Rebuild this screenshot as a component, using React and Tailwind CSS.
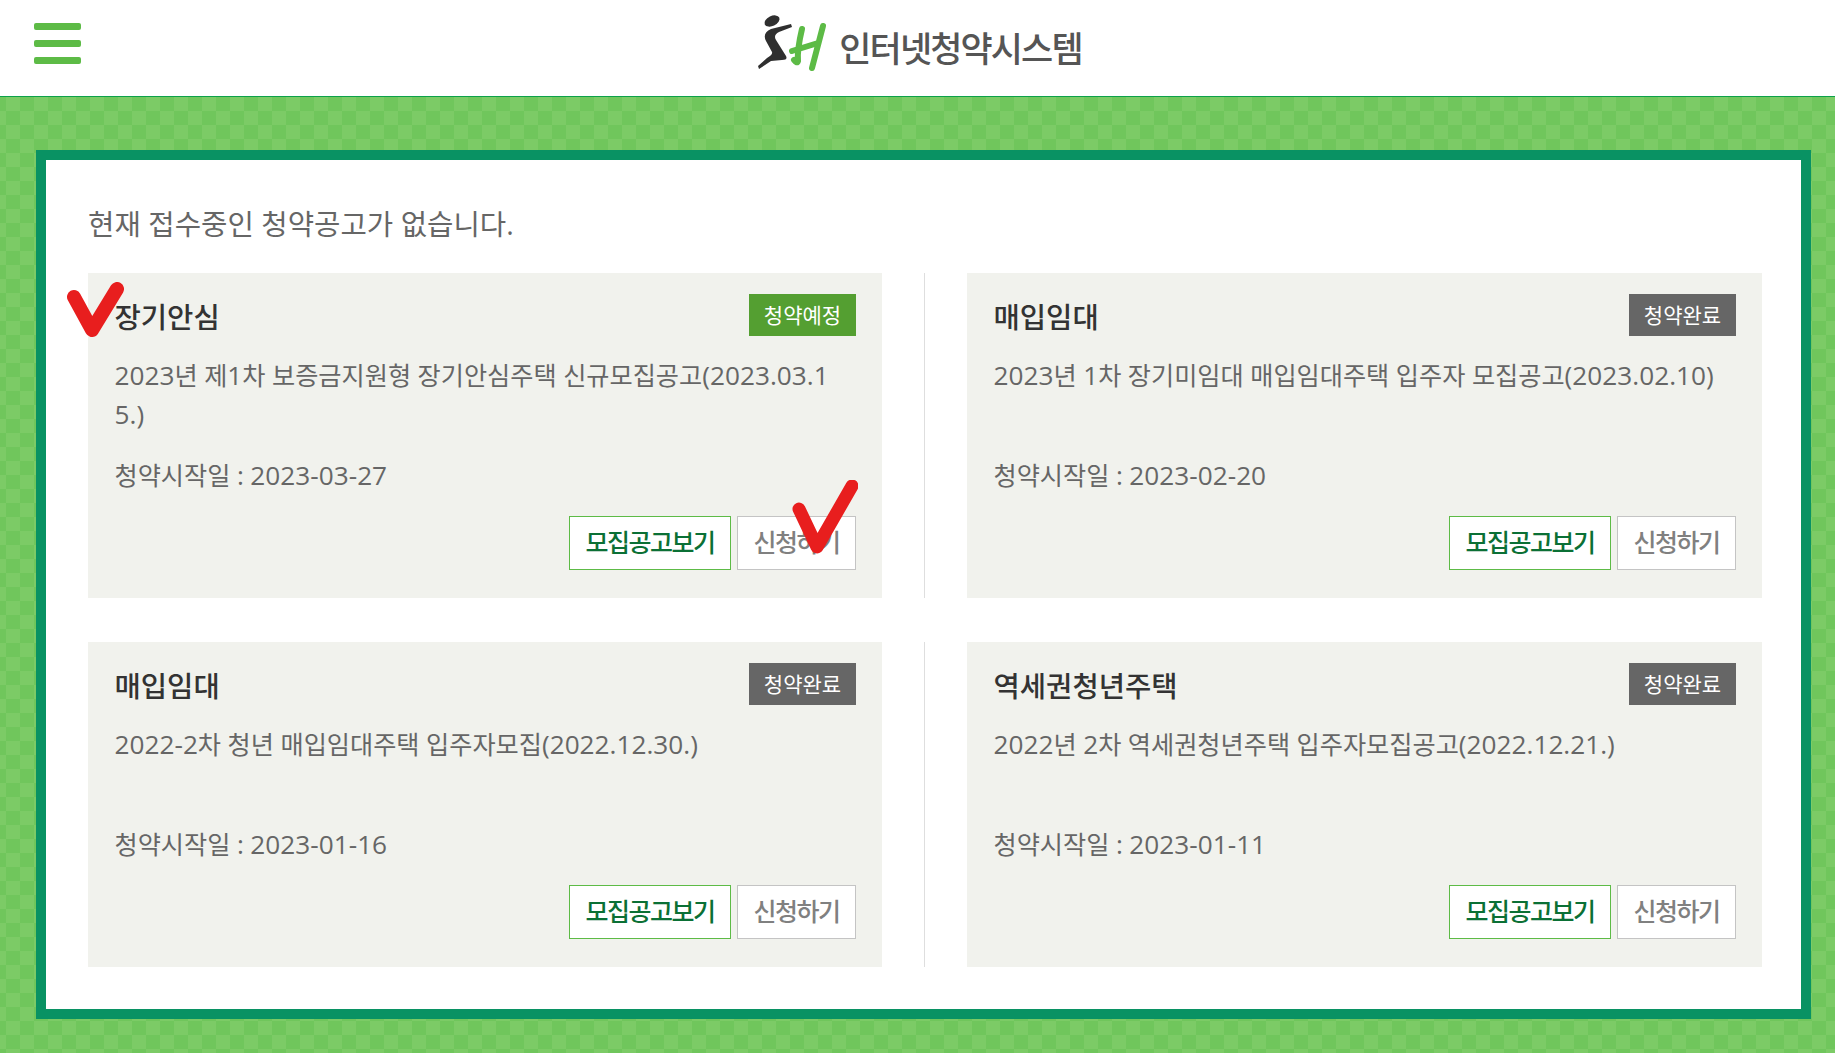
const notices = [
  {
    category: "장기안심",
    status: "청약예정",
    title: "2023년 제1차 보증금지원형 장기안심주택 신규모집공고(2023.03.15.)",
    date: "청약시작일 : 2023-03-27",
  },
  {
    category: "매입임대",
    status: "청약완료",
    title: "2023년 1차 장기미임대 매입임대주택 입주자 모집공고(2023.02.10)",
    date: "청약시작일 : 2023-02-20",
  },
  {
    category: "매입임대",
    status: "청약완료",
    title: "2022-2차 청년 매입임대주택 입주자모집(2022.12.30.)",
    date: "청약시작일 : 2023-01-16",
  },
  {
    category: "역세권청년주택",
    status: "청약완료",
    title: "2022년 2차 역세권청년주택 입주자모집공고(2022.12.21.)",
    date: "청약시작일 : 2023-01-11",
  },
];

// 숫자/기호는 한글보다 살짝 크게 보여서 글자별로 따로 감싼다
const MixedText = ({ text }) =>
  text.split(/([0-9.\-():])/).map((part, i) =>
    /^[0-9.\-():]$/.test(part) ? (
      <span key={i} className="text-[26.2px]">
        {part}
      </span>
    ) : (
      part
    )
  );

const Logo = () => (
  <svg width="90" height="70" viewBox="0 0 90 70" className="mb-[6px] shrink-0">
    <ellipse cx="23" cy="11" rx="8" ry="5" fill="#2f2f2f" transform="rotate(-25 23 11)" />
    <path
      d="M42 14 L43 17 L30 22 Q24 25 27 30 L37 46 Q39 50 33 50 L22 51 L10 59 L9 56 L18 48 Q24 45 23 42 L17 31 Q13 23 22 19 Z"
      fill="#2f2f2f"
    />
    <path
      d="M53 19 Q48 40 49 51 Q48 54 45 50 M74 16 L63 58 M43 41 L69 33"
      stroke="#5dbb46"
      strokeWidth="6"
      fill="none"
      strokeLinecap="round"
    />
  </svg>
);

const Check = ({ className, d, viewBox, width }) => (
  <svg className={className} viewBox={viewBox}>
    <path d={d} stroke="#e81e1e" strokeWidth={width} strokeLinecap="round" strokeLinejoin="round" fill="none" />
  </svg>
);

const NoticeCard = ({ notice, check }) => (
  <div className="relative h-[325px] bg-[#f1f2ed] pl-[26.5px] pr-[26px] pt-[21px]">
    <div className="flex items-start justify-between">
      <h3 className="mt-[2px] text-[28.6px] leading-[42px] font-medium text-[#333]">{notice.category}</h3>
      <span
        className={`flex h-[42px] w-[107px] items-center justify-center pt-[1px] text-[21px] text-white ${
          notice.status === "청약예정" ? "bg-[#549f31]" : "bg-[#666666]"
        }`}
      >
        {notice.status}
      </span>
    </div>
    <p className="mt-[18px] h-[78px] w-[724px] text-[25.2px] leading-[39px] text-[#666] break-all">
      <MixedText text={notice.title} />
    </p>
    <p className="mt-[22px] h-[39px] text-[25.2px] leading-[39px] text-[#666]">
      <MixedText text={notice.date} />
    </p>
    <div className="mt-[21px] flex justify-end gap-[6px]">
      <button className="h-[54px] w-[162px] border border-[#5dbb46] bg-white text-[25px] font-medium text-[#0b7035] tracking-[-1.5px]">
        모집공고보기
      </button>
      <button className="h-[54px] w-[119px] border border-[#c4c4c4] bg-white text-[25px] font-medium text-[#808080] tracking-[-1.5px]">
        신청하기
      </button>
    </div>
    {check}
  </div>
);

export default function App() {
  return (
    <div className="min-h-[1053px] font-['Open_Sans','Noto_Sans_CJK_KR',sans-serif] bg-white">
      {/* 상단 헤더 */}
      <header className="relative flex h-[97px] items-center justify-center border-b border-[#0ca14a] bg-white">
        <button className="absolute left-[34px] top-[23px] flex w-[47px] flex-col gap-[10px]">
          <span className="h-[7px] rounded-[2px] bg-[#5dbb46]" />
          <span className="h-[7px] rounded-[2px] bg-[#5dbb46]" />
          <span className="h-[7px] rounded-[2px] bg-[#5dbb46]" />
        </button>
        <div className="ml-[-4px] flex items-center">
          <Logo />
          <span className="mt-[2px] text-[35px] font-medium tracking-[-1.9px] text-[#555]">인터넷청약시스템</span>
        </div>
      </header>

      {/* 체크무늬 배경 */}
      <main className="h-[956px] bg-[#70c65c] bg-[conic-gradient(#7ccb66_25%,#70c65c_0_50%,#7ccb66_0_75%,#70c65c_0)] bg-[length:28px_28px] bg-[position:-8px_0] pl-[36px] pr-[24px] pt-[53px]">
        <section className="h-[869px] border-[10px] border-[#099263] bg-white pl-[42px] pr-[39px] pt-[39px]">
          <p className="text-[28.7px] leading-[50px] text-[#666]">현재 접수중인 청약공고가 없습니다.</p>
          <div className="mt-[24px] grid grid-cols-[794px_1fr] gap-y-[44px]">
            <NoticeCard
              notice={notices[0]}
              check={
                <>
                  <Check
                    className="absolute left-[-22px] top-[9px] h-[55px] w-[58px]"
                    viewBox="0 0 58 55"
                    width="14"
                    d="M8 15 L26 48 L51 7"
                  />
                  <Check
                    className="absolute left-[704px] top-[207px] h-[74px] w-[66px]"
                    viewBox="0 0 66 74"
                    width="13"
                    d="M7 29 L25 67 L60 6"
                  />
                </>
              }
            />
            <div className="flex">
              <div className="ml-[42px] w-px bg-[#dedede]" />
              <div className="ml-[42px] flex-1">
                <NoticeCard notice={notices[1]} />
              </div>
            </div>
            <NoticeCard notice={notices[2]} />
            <div className="flex">
              <div className="ml-[42px] w-px bg-[#dedede]" />
              <div className="ml-[42px] flex-1">
                <NoticeCard notice={notices[3]} />
              </div>
            </div>
          </div>
        </section>
      </main>
    </div>
  );
}
